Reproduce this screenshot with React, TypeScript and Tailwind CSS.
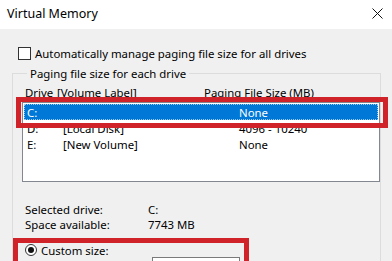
import React from "react";

const rows = [
  { drive: "C:", label: "", size: "None", selected: true },
  { drive: "D:", label: "[Local Disk]", size: "4096 - 10240", selected: false },
  { drive: "E:", label: "[New Volume]", size: "None", selected: false },
];

export default function App() {
  return (
    <div
      className="relative w-[392px] h-[261px] overflow-hidden bg-[#f0f0f0] text-[11.4px] leading-none text-black"
      style={{ fontFamily: "'Noto Sans', 'Open Sans', sans-serif" }}
    >
      {/* Title bar */}
      <div className="flex h-[29px] items-center justify-between bg-white pl-[7px] pr-[9px]">
        <span className="text-[12.5px]">Virtual Memory</span>
        <svg width="11" height="11" viewBox="0 0 11 11" className="mb-[2px]">
          <path d="M0.5 0.5 L10.5 10.5 M10.5 0.5 L0.5 10.5" stroke="#111" strokeWidth="1" />
        </svg>
      </div>

      {/* Auto checkbox */}
      <div className="mt-[18px] flex items-center gap-[4px] pl-[18px]">
        <div className="h-[13px] w-[13px] border border-[#333] bg-white" />
        <span>Automatically manage paging file size for all drives</span>
      </div>

      {/* Group box */}
      <fieldset className="ml-[12px] mt-[8px] w-[368px] border border-[#dcdcdc] pb-[40px] pl-[9px] pr-0">
        <legend className="ml-[5px] px-[3px]">Paging file size for each drive</legend>

        <div className="mt-[7px] flex h-[13px] items-center">
          <span className="w-[35px] pl-[3px]">Drive</span>
          <span className="w-[147px]">[Volume Label]</span>
          <span>Paging File Size (MB)</span>
        </div>

        <div className="mt-[3px] h-[80px] w-[358px] border border-[#828790] bg-white p-[1px]">
          {rows.map((r) => (
            <div
              key={r.drive}
              className={
                r.selected
                  ? "flex h-[16px] items-center border border-dotted border-[#9cc8f0] bg-[#0078d7] text-white"
                  : "flex h-[16px] items-center border border-transparent"
              }
            >
              <span className="w-[38px] pl-[2px]">{r.drive}</span>
              <span className="w-[176px]">{r.label}</span>
              <span>{r.size}</span>
            </div>
          ))}
        </div>

        <div className="mt-[22px] grid grid-cols-[123px_1fr] gap-y-[3px] pl-[3px]">
          <span>Selected drive:</span>
          <span>C:</span>
          <span>Space available:</span>
          <span>7743 MB</span>
        </div>

        <div className="mt-[14px] flex items-center gap-[4px] pl-[3px]">
          <div className="flex h-[12px] w-[12px] items-center justify-center rounded-full border border-[#333] bg-white">
            <div className="h-[6px] w-[6px] rounded-full bg-[#111]" />
          </div>
          <span>Custom size:</span>
        </div>
      </fieldset>

      {/* Custom size input (partially visible) */}
      <div className="absolute left-[152px] top-[257px] h-[20px] w-[88px] border border-[#7a7a7a] bg-white" />

      {/* Red highlight boxes */}
      <div className="pointer-events-none absolute left-[16px] top-[97px] h-[31px] w-[372px] border-[5px] border-[#cf2229]" />
      <div className="pointer-events-none absolute left-[13px] top-[238px] h-[40px] w-[236px] border-[5px] border-[#cf2229]" />
    </div>
  );
}
